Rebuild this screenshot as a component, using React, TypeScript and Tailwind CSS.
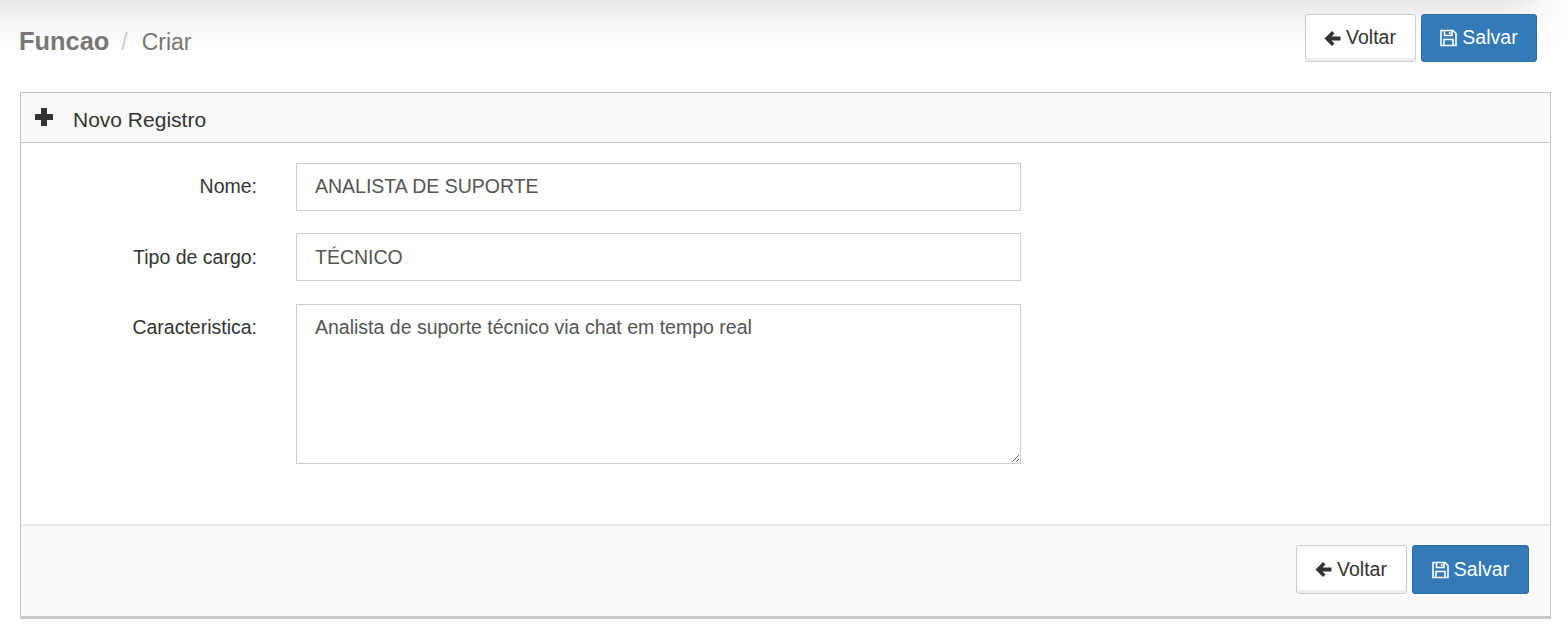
import React from "react";

function ArrowIcon() {
  return (
    <svg viewBox="0 0 17 17" className="h-[17px] w-[17px] shrink-0 text-[#333]" fill="currentColor">
      <path d="M0.5 8.5 L8 1 L10.5 3.5 L7.5 6.5 H16.5 V10.5 H7.5 L10.5 13.5 L8 16 Z" />
    </svg>
  );
}

function SaveIcon() {
  return (
    <svg viewBox="0 0 17 18" className="h-[18px] w-[17px] shrink-0" fill="none" stroke="currentColor" strokeWidth="1.6">
      <path d="M1 1.5 H13 L16 4.5 V16.5 H1 Z" />
      <path d="M4.5 1.5 V6.5 H12 V1.5" />
      <path d="M4 16.5 V10.5 H13 V16.5" />
      <path d="M9.7 3 V5" />
    </svg>
  );
}

function PlusIcon() {
  return (
    <svg viewBox="0 0 18 18" className="mb-[2px] h-[18px] w-[18px] shrink-0 text-[#333]" fill="currentColor">
      <path d="M6 0 H12 V6 H18 V12 H12 V18 H6 V12 H0 V6 H6 Z" />
    </svg>
  );
}

function Buttons({ className, saveWidth }: { className: string; saveWidth: string }) {
  return (
    <div className={"flex gap-[5px] " + className}>
      <button className="flex w-[111px] items-center justify-center gap-[5px] rounded-[3px] border border-[#ccc] bg-white pr-[1px] text-[19.5px] text-[#333] shadow-[inset_0_-3px_0_#eeeeee]">
        <ArrowIcon />
        <span>Voltar</span>
      </button>
      <button
        className={
          "flex items-center justify-center gap-[5px] rounded-[3px] border border-[#2e6da4] bg-[#337ab7] text-[19.5px] text-white " +
          saveWidth
        }
      >
        <SaveIcon />
        <span>Salvar</span>
      </button>
    </div>
  );
}

function Row({ label, value, labelPad, inputPad }: { label: string; value: string; labelPad: string; inputPad: string }) {
  return (
    <div className="flex items-center">
      <label className={"w-[236px] text-right text-[19.5px] text-[#333] " + labelPad}>{label}</label>
      <input
        readOnly
        value={value}
        className={"ml-[39px] h-[48px] w-[725px] border border-[#ccc] bg-white px-[18px] text-[19.5px] text-[#555] outline-none " + inputPad}
      />
    </div>
  );
}

export default function App() {
  return (
    <div className="h-[631px] bg-white font-['Liberation_Sans',Arial,sans-serif]">
      <div className="h-[92px] bg-[linear-gradient(to_left,#ffffff_0px,#ffffff00_70px),linear-gradient(to_bottom,#e6e6e6_0px,#f6f6f6_22px,#ffffff_50px)] pl-[19px] pr-[31px]">
        <div className="flex items-start justify-between">
          <div className="flex items-baseline pt-[25px] text-[#777]">
            <span className="text-[25.4px] font-bold leading-[32px] text-[#777]">Funcao</span>
            <span className="ml-[12px] text-[23px] leading-[32px] text-[#ccc]">/</span>
            <span className="ml-[14px] text-[23px] leading-[32px] text-[#777]">Criar</span>
          </div>
          <Buttons className="mt-[14px] h-[48px]" saveWidth="w-[116px]" />
        </div>
      </div>
      <div className="mx-[20px] h-[527px] w-[1531px] border-x border-x-[#c4c4c4] border-t border-t-[#c4c4c4] border-b-[3px] border-b-[#c8c8c8]">
        <div className="flex h-[50px] items-center border-b border-b-[#c4c4c4] bg-[#fafafa] pl-[14px] text-[#333]">
          <PlusIcon />
          <span className="ml-[20px] pt-[5px] text-[21px]">Novo Registro</span>
        </div>
        <div className="flex h-[381px] flex-col gap-[22px] pt-[20px]">
          <Row label="Nome:" value="ANALISTA DE SUPORTE" labelPad="" inputPad="pb-[2px]" />
          <Row label="Tipo de cargo:" value="TÉCNICO" labelPad="pt-[2px]" inputPad="" />
          <div className="mt-[1px] flex items-start">
            <label className="w-[236px] pt-[9px] text-right text-[19.5px] text-[#333]">Caracteristica:</label>
            <textarea
              readOnly
              value="Analista de suporte técnico via chat em tempo real"
              className="ml-[39px] h-[160px] w-[725px] border border-[#ccc] bg-white px-[18px] py-[10px] text-[19.5px] leading-[25px] text-[#555] outline-none"
            />
          </div>
        </div>
        <div className="flex h-[92px] items-start justify-end border-t-2 border-t-[#e7e7e7] bg-[#fafafa] pr-[21px] pt-[19px]">
          <Buttons className="h-[49px]" saveWidth="w-[117px]" />
        </div>
      </div>
    </div>
  );
}
